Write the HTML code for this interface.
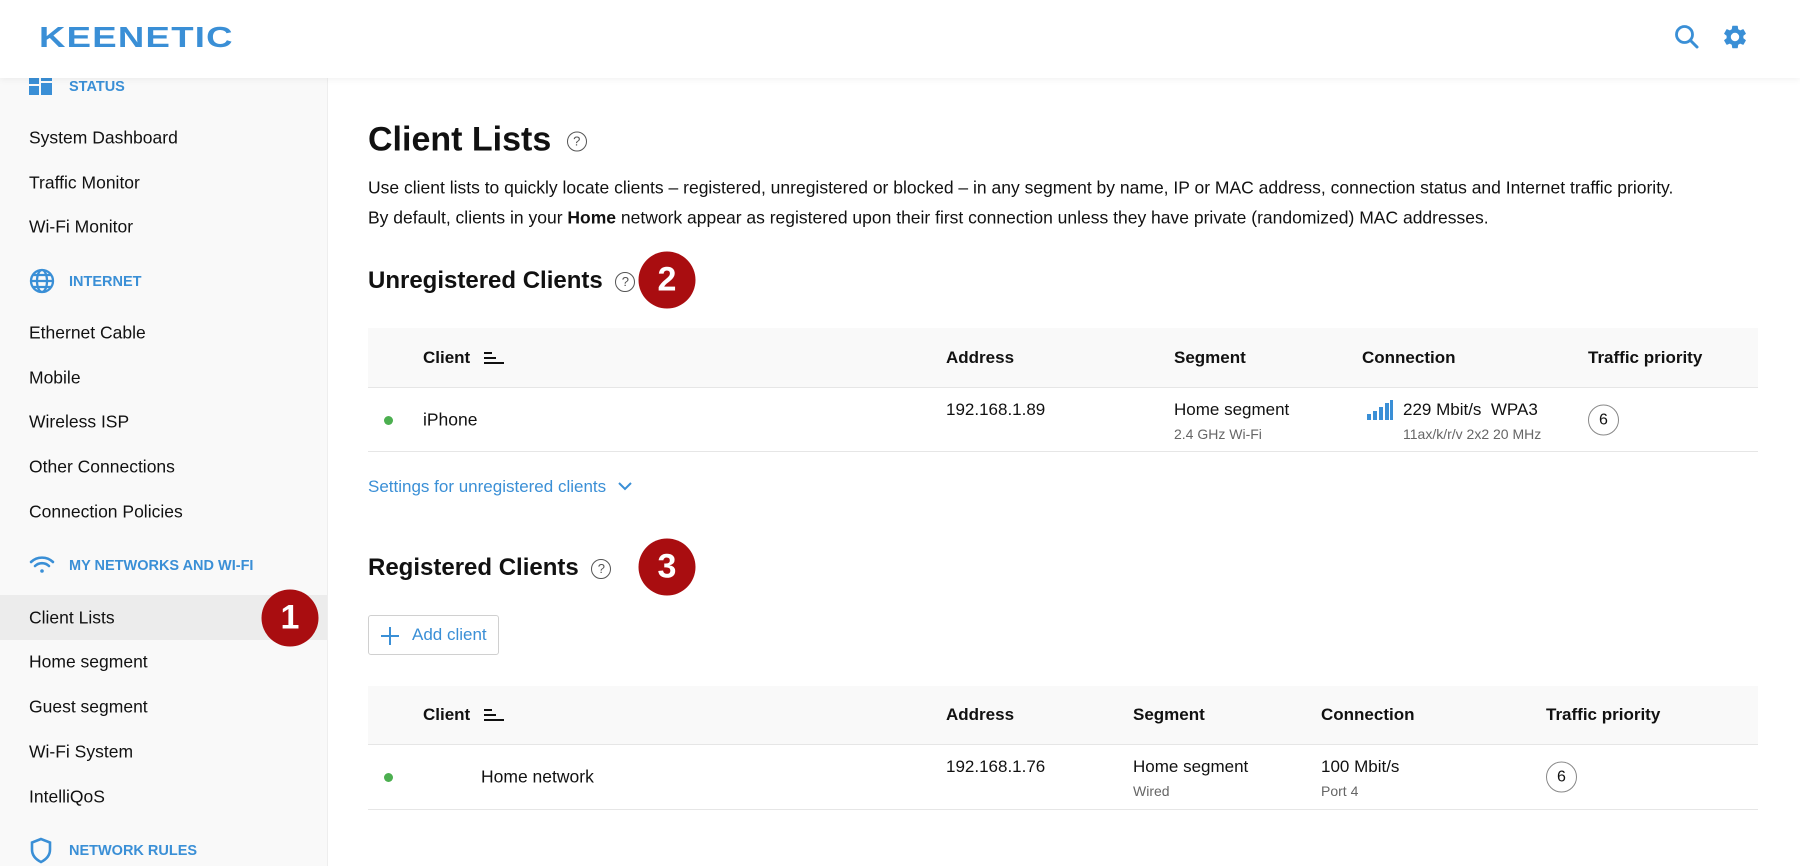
<!DOCTYPE html>
<html><head><meta charset="utf-8"><style>
*{margin:0;padding:0;box-sizing:border-box}
body{width:1800px;height:866px;overflow:hidden;background:#fff;font-family:"Liberation Sans",Arial,sans-serif;color:#111;position:relative}
.a{position:absolute;white-space:nowrap}
#hdr{position:absolute;left:0;top:0;width:1800px;height:78px;background:#fff;box-shadow:0 2px 6px rgba(0,0,0,.05);z-index:2}
#side{position:absolute;left:0;top:78px;width:328px;height:788px;background:#f9f9f9;border-right:1px solid #eee}
.it{position:absolute;left:29px;font-size:17.5px;color:#111;transform:translateY(-50%)}
.sec{position:absolute;left:69px;font-size:14.5px;font-weight:bold;color:#3a8fd6;transform:translateY(-50%)}
.ic{position:absolute;left:29px}
.v{transform:translateY(-50%)}
.th{font-weight:bold;font-size:17px}
.badge{position:absolute;width:57px;height:57px;border-radius:50%;background:#a90d10;color:#fff;font-weight:bold;font-size:34px;text-align:center;line-height:57px;transform:translate(-50%,-50%)}
.q{display:inline-block;width:20px;height:20px;border:1.5px solid #555;border-radius:50%;font-size:13px;font-weight:normal;text-align:center;line-height:17px;color:#555;vertical-align:middle}
.prio{position:absolute;width:31px;height:31px;border:1.5px solid #888;border-radius:50%;text-align:center;line-height:29px;font-size:16px;transform:translateY(-50%)}
.sub{font-size:14px;color:#666}
</style></head><body>
<div id="hdr">
<div class="a" style="left:39px;top:22px;font-size:29px;font-weight:bold;color:#3a8fd6;letter-spacing:1px;transform:scaleX(1.26);transform-origin:left">KEENETIC</div>
<svg class="a" style="left:1674px;top:24px" width="26" height="26" viewBox="0 0 26 26"><circle cx="10.5" cy="10.5" r="8" fill="none" stroke="#3a8fd6" stroke-width="2.8"/><path d="M16.5 16.5L23 23" stroke="#3a8fd6" stroke-width="3" stroke-linecap="round"/></svg>
<svg class="a" style="left:1721px;top:23px" width="28" height="28" viewBox="0 0 24 24"><path fill="#3a8fd6" d="M19.14 12.94c.04-.3.06-.61.06-.94s-.02-.64-.07-.94l2.03-1.58a.49.49 0 0 0 .12-.61l-1.92-3.320a.49.49 0 0 0-.59-.22l-2.390.96c-.5-.38-1.030-.7-1.620-.94l-.36-2.54A.48.48 0 0 0 13.92 2.4h-3.84c-.24 0-.43.17-.47.41l-.36 2.54c-.59.24-1.130.57-1.620.94l-2.390-.96a.48.48 0 0 0-.59.22L2.74 8.87a.47.47 0 0 0 .12.61l2.03 1.58c-.05.3-.09.63-.09.94s.02.64.07.94l-2.030 1.580a.49.49 0 0 0-.12.61l1.92 3.32c.12.22.37.29.59.22l2.39-.96c.5.38 1.03.7 1.62.94l.36 2.54c.05.24.24.41.48.41h3.84c.24 0 .44-.17.47-.41l.36-2.54c.59-.24 1.13-.56 1.62-.94l2.39.96c.22.08.47 0 .59-.22l1.92-3.32a.47.47 0 0 0-.12-.61l-2.01-1.58zM12 15.6A3.6 3.6 0 1 1 12 8.4a3.6 3.6 0 0 1 0 7.2z"/></svg>
</div>
<div id="side">
<div class="a" style="left:0;top:517px;width:327px;height:45px;background:#ececec"></div>
</div>
<svg class="ic" style="top:76px" width="24" height="20" viewBox="0 0 24 20"><rect x="0" y="0" width="10" height="8" fill="#3a8fd6"/><rect x="12" y="0" width="11" height="5" fill="#3a8fd6"/><rect x="0" y="10" width="10" height="9" fill="#3a8fd6"/><rect x="12" y="7" width="11" height="12" fill="#3a8fd6"/></svg>
<div class="sec" style="top:87px">STATUS</div>
<div class="it" style="top:138px">System Dashboard</div>
<div class="it" style="top:183px">Traffic Monitor</div>
<div class="it" style="top:227px">Wi-Fi Monitor</div>
<svg class="ic" style="top:268px" width="26" height="26" viewBox="0 0 26 26" fill="none" stroke="#3a8fd6" stroke-width="2.3"><circle cx="13" cy="13" r="11"/><ellipse cx="13" cy="13" rx="5" ry="11"/><path d="M2 13h22M4 7h18M4 19h18"/></svg>
<div class="sec" style="top:282px">INTERNET</div>
<div class="it" style="top:333px">Ethernet Cable</div>
<div class="it" style="top:378px">Mobile</div>
<div class="it" style="top:422px">Wireless ISP</div>
<div class="it" style="top:467px">Other Connections</div>
<div class="it" style="top:512px">Connection Policies</div>
<svg class="ic" style="top:555px" width="26" height="20" viewBox="0 0 26 20" fill="none" stroke="#3a8fd6" stroke-width="2.6" stroke-linecap="round"><path d="M2 7a16 16 0 0 1 22 0"/><path d="M6 11a10 10 0 0 1 14 0"/><circle cx="13" cy="16" r="1.8" fill="#3a8fd6" stroke="none"/></svg>
<div class="sec" style="top:566px">MY NETWORKS AND WI-FI</div>
<div class="it" style="top:618px">Client Lists</div>
<div class="it" style="top:662px">Home segment</div>
<div class="it" style="top:707px">Guest segment</div>
<div class="it" style="top:752px">Wi-Fi System</div>
<div class="it" style="top:797px">IntelliQoS</div>
<svg class="ic" style="top:837px" width="24" height="27" viewBox="0 0 24 27"><path d="M12 2L3 5.5v7c0 6 4 10 9 12.5 5-2.5 9-6.5 9-12.5v-7z" fill="none" stroke="#3a8fd6" stroke-width="2.6"/></svg>
<div class="sec" style="top:851px">NETWORK RULES</div>
<div class="badge" style="left:290px;top:618px">1</div>

<div class="a v" style="left:368px;top:140px;font-size:34px;font-weight:bold">Client Lists <span class="q" style="margin-left:6px">?</span></div>
<div class="a v" style="left:368px;top:188px;font-size:17.5px">Use client lists to quickly locate clients – registered, unregistered or blocked – in any segment by name, IP or MAC address, connection status and Internet traffic priority.</div>
<div class="a v" style="left:368px;top:218px;font-size:17.5px">By default, clients in your <b>Home</b> network appear as registered upon their first connection unless they have private (randomized) MAC addresses.</div>
<div class="a v" style="left:368px;top:281px;font-size:24px;font-weight:bold">Unregistered Clients <span class="q" style="margin-left:6px">?</span></div>
<div class="badge" style="left:667px;top:280px">2</div>

<div class="a" style="left:368px;top:328px;width:1390px;height:60px;background:#f9f9f9;border-bottom:1px solid #e6e6e6"></div>
<div class="a" style="left:368px;top:451px;width:1390px;height:1px;background:#e6e6e6"></div>
<div class="a v th" style="left:423px;top:358px">Client</div>
<svg class="a" style="left:483px;top:351px" width="22" height="14"><path d="M1 2h8M1 7h12M1 12h20" stroke="#111" stroke-width="2"/></svg>
<div class="a v th" style="left:946px;top:358px">Address</div>
<div class="a v th" style="left:1174px;top:358px">Segment</div>
<div class="a v th" style="left:1362px;top:358px">Connection</div>
<div class="a v th" style="left:1588px;top:358px">Traffic priority</div>
<div class="a" style="left:384px;top:416px;width:9px;height:9px;border-radius:50%;background:#4caf50"></div>
<div class="a v" style="left:423px;top:420px;font-size:17.5px">iPhone</div>
<div class="a v" style="left:946px;top:410px;font-size:17px">192.168.1.89</div>
<div class="a v" style="left:1174px;top:410px;font-size:17px">Home segment</div>
<div class="a v sub" style="left:1174px;top:434px">2.4 GHz Wi-Fi</div>
<svg class="a" style="left:1367px;top:400px" width="27" height="20"><rect x="0" y="14" width="4" height="6" fill="#3a8fd6"/><rect x="6" y="11" width="4" height="9" fill="#3a8fd6"/><rect x="12" y="7" width="4" height="13" fill="#3a8fd6"/><rect x="18" y="3" width="4" height="17" fill="#3a8fd6"/><rect x="23" y="0" width="3" height="20" fill="#3a8fd6"/></svg>
<div class="a v" style="left:1403px;top:410px;font-size:17px">229 Mbit/s &nbsp;WPA3</div>
<div class="a v sub" style="left:1403px;top:434px">11ax/k/r/v 2x2 20 MHz</div>
<div class="prio" style="left:1588px;top:420px">6</div>
<div class="a v" style="left:368px;top:487px;font-size:17px;color:#3a8fd6">Settings for unregistered clients <svg width="16" height="12" style="margin-left:6px"><path d="M2 3l6 6 6-6" fill="none" stroke="#3a8fd6" stroke-width="2"/></svg></div>

<div class="a v" style="left:368px;top:568px;font-size:24px;font-weight:bold">Registered Clients <span class="q" style="margin-left:6px">?</span></div>
<div class="badge" style="left:667px;top:567px">3</div>
<div class="a" style="left:368px;top:615px;width:131px;height:40px;border:1px solid #d0d0d0;border-radius:3px;font-size:17px;color:#3a8fd6;line-height:38px;padding-left:43px">Add client</div>
<svg class="a" style="left:380px;top:626px" width="20" height="20"><path d="M10 1v18M1 10h18" stroke="#3a8fd6" stroke-width="2"/></svg>

<div class="a" style="left:368px;top:686px;width:1390px;height:59px;background:#f9f9f9;border-bottom:1px solid #e6e6e6"></div>
<div class="a" style="left:368px;top:809px;width:1390px;height:1px;background:#e6e6e6"></div>
<div class="a v th" style="left:423px;top:715px">Client</div>
<svg class="a" style="left:483px;top:708px" width="22" height="14"><path d="M1 2h8M1 7h12M1 12h20" stroke="#111" stroke-width="2"/></svg>
<div class="a v th" style="left:946px;top:715px">Address</div>
<div class="a v th" style="left:1133px;top:715px">Segment</div>
<div class="a v th" style="left:1321px;top:715px">Connection</div>
<div class="a v th" style="left:1546px;top:715px">Traffic priority</div>
<div class="a" style="left:384px;top:773px;width:9px;height:9px;border-radius:50%;background:#4caf50"></div>
<div class="a v" style="left:481px;top:777px;font-size:17.5px">Home network</div>
<div class="a v" style="left:946px;top:767px;font-size:17px">192.168.1.76</div>
<div class="a v" style="left:1133px;top:767px;font-size:17px">Home segment</div>
<div class="a v sub" style="left:1133px;top:791px">Wired</div>
<div class="a v" style="left:1321px;top:767px;font-size:17px">100 Mbit/s</div>
<div class="a v sub" style="left:1321px;top:791px">Port 4</div>
<div class="prio" style="left:1546px;top:777px">6</div>
</body></html>
